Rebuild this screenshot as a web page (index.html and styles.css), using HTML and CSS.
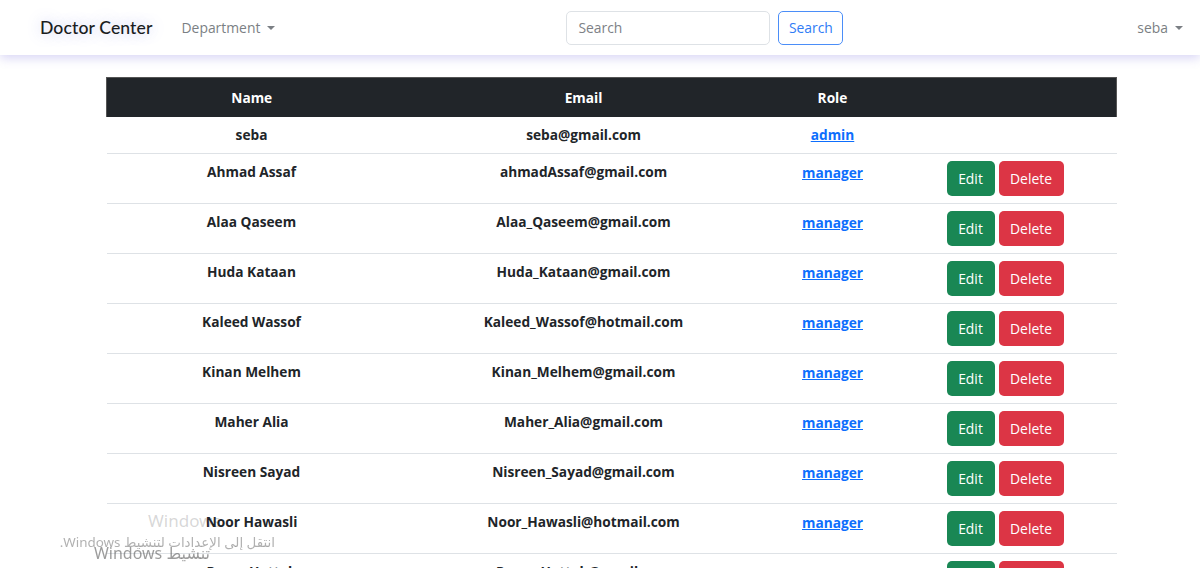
FILE: index.html
```html
<!DOCTYPE html>
<html lang="en">
<head>
<meta charset="utf-8">
<title>Doctor Center</title>
<link rel="stylesheet" href="styles.css">
</head>
<body>
<nav class="navbar">
  <a class="brand" href="#">Doctor Center</a>
  <a class="nav-link dropdown" href="#">Department<span class="caret"></span></a>
  <form class="search">
    <input class="search-input" type="text" placeholder="Search">
    <button class="search-btn" type="button">Search</button>
  </form>
  <a class="nav-link dropdown user" href="#">seba<span class="caret"></span></a>
</nav>

<main class="content">
  <table class="table">
    <thead>
      <tr><th class="c-name">Name</th><th class="c-email">Email</th><th class="c-role">Role</th><th class="c-act"></th></tr>
    </thead>
    <tbody>
      <tr class="short"><td>seba</td><td>seba@gmail.com</td><td><a href="#">admin</a></td><td></td></tr>
      <tr><td>Ahmad Assaf</td><td>ahmadAssaf@gmail.com</td><td><a href="#">manager</a></td><td><div class="actions"><button class="btn edit">Edit</button><button class="btn del">Delete</button></div></td></tr>
      <tr><td>Alaa Qaseem</td><td>Alaa_Qaseem@gmail.com</td><td><a href="#">manager</a></td><td><div class="actions"><button class="btn edit">Edit</button><button class="btn del">Delete</button></div></td></tr>
      <tr><td>Huda Kataan</td><td>Huda_Kataan@gmail.com</td><td><a href="#">manager</a></td><td><div class="actions"><button class="btn edit">Edit</button><button class="btn del">Delete</button></div></td></tr>
      <tr><td>Kaleed Wassof</td><td>Kaleed_Wassof@hotmail.com</td><td><a href="#">manager</a></td><td><div class="actions"><button class="btn edit">Edit</button><button class="btn del">Delete</button></div></td></tr>
      <tr><td>Kinan Melhem</td><td>Kinan_Melhem@gmail.com</td><td><a href="#">manager</a></td><td><div class="actions"><button class="btn edit">Edit</button><button class="btn del">Delete</button></div></td></tr>
      <tr><td>Maher Alia</td><td>Maher_Alia@gmail.com</td><td><a href="#">manager</a></td><td><div class="actions"><button class="btn edit">Edit</button><button class="btn del">Delete</button></div></td></tr>
      <tr><td>Nisreen Sayad</td><td>Nisreen_Sayad@gmail.com</td><td><a href="#">manager</a></td><td><div class="actions"><button class="btn edit">Edit</button><button class="btn del">Delete</button></div></td></tr>
      <tr><td>Noor Hawasli</td><td>Noor_Hawasli@hotmail.com</td><td><a href="#">manager</a></td><td><div class="actions"><button class="btn edit">Edit</button><button class="btn del">Delete</button></div></td></tr>
      <tr><td>Rama Hattab</td><td>Rama_Hattab@gmail.com</td><td><a href="#">manager</a></td><td><div class="actions"><button class="btn edit">Edit</button><button class="btn del">Delete</button></div></td></tr>
    </tbody>
  </table>
</main>

<div class="wm-ghost">Windows</div>
<div class="watermark" dir="rtl">
  <div class="wm-small">انتقل إلى الإعدادات لتنشيط Windows.</div>
  <div class="wm-big">تنشيط Windows</div>
</div>
</body>
</html>
```

FILE: styles.css
```css
html, body {
  margin: 0;
  padding: 0;
  overflow: hidden;
  height: 568px;
}
body {
  font-family: "Open Sans", "Noto Sans", sans-serif;
  font-size: 13.7px;
  color: #212529;
  background: #fff;
}
a { text-decoration: none; }

.navbar {
  position: relative;
  z-index: 2;
  height: 55px;
  display: flex;
  align-items: center;
  padding: 0 16px 0 40px;
  background: #fff;
  box-shadow: 0 3px 10px rgba(110, 100, 220, 0.28);
}
.brand {
  font-family: "Lato", "Open Sans", sans-serif;
  font-size: 17.6px;
  font-weight: 500;
  color: #1a1d21;
  margin-right: 29px;
  text-shadow: 0 0 14px rgba(120, 130, 230, 0.45);
  letter-spacing: 0.1px;
}
.nav-link {
  color: #7b7f84;
  font-size: 13.9px;
  display: inline-flex;
  align-items: center;
}
.caret {
  display: inline-block;
  margin-left: 7px;
  border-top: 4.5px solid #7b7f84;
  border-left: 4px solid transparent;
  border-right: 4px solid transparent;
  margin-top: 1px;
}
.search {
  display: flex;
  gap: 8px;
  margin-left: 291px;
}
.search-input {
  width: 204px;
  height: 34px;
  box-sizing: border-box;
  border: 1px solid #dee2e6;
  border-radius: 5px;
  padding: 0 11px;
  font-family: inherit;
  font-size: 13.9px;
  color: #212529;
}
.search-input::placeholder { color: #7d8186; }
.search-btn {
  height: 34px;
  width: 65px;
  box-sizing: border-box;
  border: 1px solid #4b8ef8;
  border-radius: 5px;
  background: #fff;
  color: #2f7cf6;
  font-family: inherit;
  font-size: 13.9px;
  padding: 0;
}
.user { margin-left: auto; margin-right: 1px; }

.content {
  padding: 22px 84px 0 106px;
}
.table {
  width: 1010px;
  border-collapse: collapse;
  table-layout: fixed;
}
.table th, .table td { box-sizing: border-box; }
.c-name { width: 290px; }
.c-email { width: 374px; }
.c-role { width: 124px; }
.c-act { width: 222px; }
.table th {
  background: #212529;
  color: #fff;
  font-weight: 700;
  height: 39px;
  padding: 0 7px;
  text-align: center;
  border-top: 1px solid #555;
}
.table th:first-child { border-left: 1px solid #555; }
.table th:last-child { border-right: 1px solid #555; }
.table td {
  text-align: center;
  vertical-align: top;
  font-weight: 700;
  padding: 7px 7px;
  line-height: 22px;
  border-bottom: 1px solid #dee2e6;
}
.table td a {
  color: #0d6efd;
  text-decoration: underline;
  font-weight: 700;
}
.table tr:not(.short) td a { position: relative; top: 1px; }
.actions {
  display: flex;
  justify-content: center;
  gap: 4px;
  padding-right: 1px;
}
.btn {
  height: 35px;
  border: none;
  border-radius: 5px;
  color: #fff;
  font-family: inherit;
  font-size: 13.9px;
  line-height: 35px;
}
.edit { background: #198754; width: 48px; padding: 0; }
.del { background: #dc3545; width: 65px; padding: 0; }

.wm-ghost {
  position: absolute;
  left: 148px;
  top: 510px;
  font-family: "Noto Sans", "DejaVu Sans", sans-serif;
  font-size: 17px;
  line-height: 22px;
  color: rgba(140, 140, 140, 0.35);
  z-index: -1;
}
.watermark {
  position: fixed;
  left: 62px;
  top: 510px;
  width: 213px;
  color: rgba(80, 80, 80, 0.45);
  font-family: "Noto Sans", "DejaVu Sans", sans-serif;
  pointer-events: none;
  z-index: 5;
}
.wm-small {
  position: absolute;
  right: 0;
  top: 24px;
  font-size: 13.4px;
  white-space: nowrap;
  line-height: 16px;
}
.wm-big {
  position: absolute;
  right: 65px;
  top: 31px;
  font-size: 16px;
  white-space: nowrap;
  color: rgba(90, 90, 90, 0.6);
  line-height: 24px;
}
```
